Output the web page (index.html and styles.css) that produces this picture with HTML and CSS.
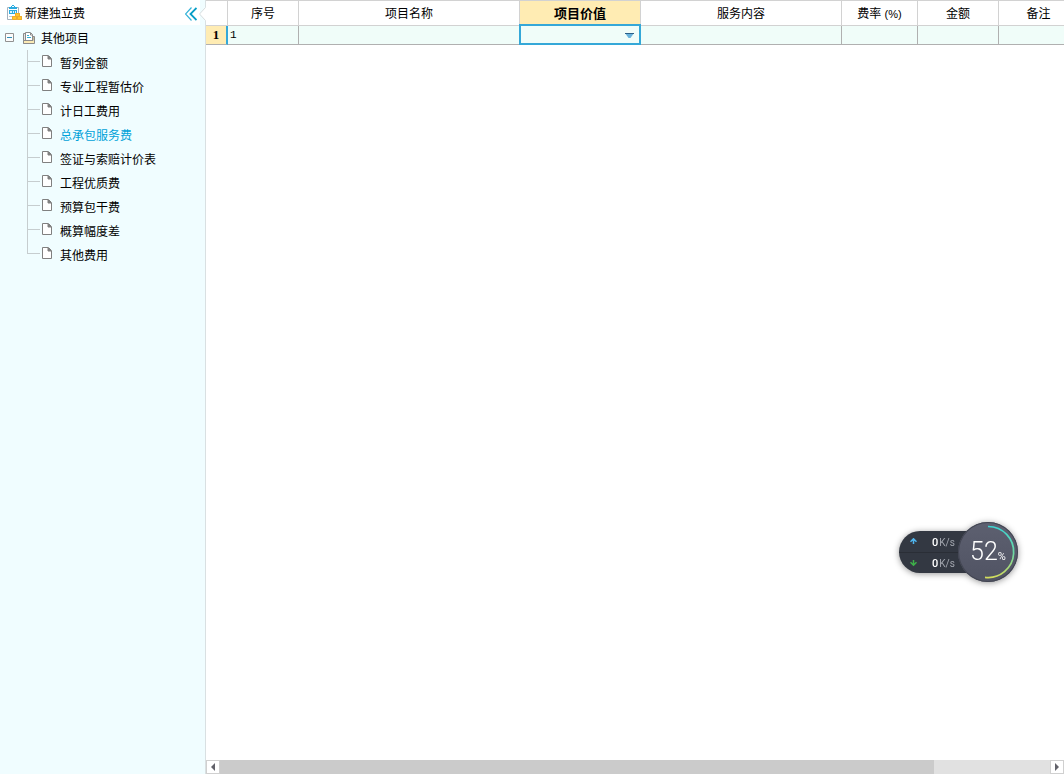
FILE: index.html
```
<!DOCTYPE html>
<html lang="zh-CN">
<head>
<meta charset="utf-8">
<title>其他项目</title>
<link rel="stylesheet" href="styles.css">
</head>
<body>
<svg class="defs" aria-hidden="true">
  <symbol id="page" viewBox="0 0 11 13"><path d="M.5.5h6l3 3v8h-9z" fill="#fff" stroke="#808080"/><path d="M6 1v3h3z" fill="#808080" stroke="#808080"/></symbol>
</svg>
<div class="app">
  <aside class="sidebar">
    <header class="side-head">
      <button class="new-fee" type="button">
        <svg width="15" height="16" viewBox="0 0 15 16" aria-hidden="true">
          <path d="M.5 2.500h11v12H.5z" fill="#fff" stroke="#a3b1bd"/>
          <path d="M2 2h2V1h1V0h2v1h1v1h2v2H2z" fill="#2aabe0"/><path d="M5 1h2v1H5z" fill="#fff"/>
          <path d="M2 5h8v4H2z" fill="#2aabe0"/><path d="M3 6h2v2H3zM6 6h1v2H6zM8 6h1v2H8z" fill="#d9f3ff"/><path d="M2 11.500h3" stroke="#bcc9d2"/>
          <path d="M8 8h5v3H8z" fill="#ffc629"/><path d="M5 11h4v4H5zM10 11h5v4h-5z" fill="#ffc629"/><path d="M8.500 8.500h4v3h-4zM5.500 11.500h4v3h-4zM10.500 11.500h4v3h-4z" stroke="#edaa2e" fill="none"/>
        </svg>
        <span>新建独立费</span>
      </button>
      <button class="collapse" type="button" aria-label="收起">
        <svg width="12" height="14" viewBox="0 0 12 14" fill="none"><path d="M6.500.500L.500 7l6 6.500" stroke="#35b3d9" stroke-width="1.200"/><path d="M11.500 1L5.500 7l6 6" stroke="#079dc6" stroke-width="1.800"/></svg>
      </button>
    </header>
    <svg class="notch" width="7" height="14" viewBox="0 0 7 14" aria-hidden="true"><path d="M7 0L1 7l6 7z" fill="#fff"/><path d="M6.500 .5L.500 7l6 6.500" fill="none" stroke="#d8dcdd"/></svg>
    <nav class="tree">
      <div class="root">
        <button class="toggle" type="button" aria-label="折叠"><svg width="9" height="9" viewBox="0 0 9 9"><path d="M.5.5h8v8h-8z" fill="#fcfcfc" stroke="#919191"/><path d="M2 4.500h5" stroke="#2f8fb8"/></svg></button>
        <svg width="12" height="12" viewBox="0 0 12 12" aria-hidden="true"><path d="M.5 1.500h2v10h-2z" fill="#e6e6e6" stroke="#8b8b8b"/><path d="M2.500.5h5l2 2v6h-7z" fill="#fff" stroke="#8b8b8b"/><path d="M7.500 1v2h2" stroke="#8b8b8b" fill="none"/><path d="M4 3.500h2M4 5.500h4" stroke="#35afd3"/><path d="M10 4.500h1.500v7H.5v-3h9.500z" fill="#fbeab4" stroke="#8b8b8b"/></svg>
        <span>其他项目</span>
      </div>
      <ul>
        <li><svg><use href="#page"/></svg><a href="#">暂列金额</a></li>
        <li><svg><use href="#page"/></svg><a href="#">专业工程暂估价</a></li>
        <li><svg><use href="#page"/></svg><a href="#">计日工费用</a></li>
        <li><svg><use href="#page"/></svg><a class="current" href="#">总承包服务费</a></li>
        <li><svg><use href="#page"/></svg><a href="#">签证与索赔计价表</a></li>
        <li><svg><use href="#page"/></svg><a href="#">工程优质费</a></li>
        <li><svg><use href="#page"/></svg><a href="#">预算包干费</a></li>
        <li><svg><use href="#page"/></svg><a href="#">概算幅度差</a></li>
        <li><svg><use href="#page"/></svg><a href="#">其他费用</a></li>
      </ul>
    </nav>
  </aside>
  <main class="main">
    <div class="sheet">
      <table>
        <colgroup><col class="c-row"><col class="c-no"><col class="c-name"><col class="c-value"><col class="c-service"><col class="c-rate"><col class="c-sum"><col class="c-note"></colgroup>
        <thead><tr><td></td><th>序号</th><th>项目名称</th><th class="active">项目价值</th><th>服务内容</th><th>费率 <span class="unit">(%)</span></th><th>金额</th><th>备注</th></tr></thead>
        <tbody><tr><th class="row-no" scope="row">1</th><td class="number">1</td><td></td>
          <td class="edit"><div class="combo"><select aria-label="项目价值"><option></option></select><svg width="9" height="5" viewBox="0 0 9 5" aria-hidden="true"><path d="M0 0h9L5.500 5h-2z" fill="#68b2dc"/><path d="M0 .5h9" stroke="#2b5f87"/></svg></div></td>
          <td></td><td></td><td></td><td></td></tr></tbody>
      </table>
    </div>
    <div class="scrollbar">
      <button type="button" aria-label="向左"><svg width="4" height="8" viewBox="0 0 4 8"><path d="M4 0v8L0 4z" fill="#62626a"/></svg></button>
      <div class="track"><div class="thumb"></div></div>
      <button type="button" aria-label="向右"><svg width="4" height="8" viewBox="0 0 4 8"><path d="M0 0v8l4-4z" fill="#62626a"/></svg></button>
    </div>
  </main>
  <div class="monitor">
    <div class="speeds">
      <div class="speed"><svg width="7" height="7" viewBox="0 0 7 7" fill="none" stroke="#4fb4ed" stroke-width="1.500"><path d="M3.500 6V1M.5 3.800l3-3 3 3"/></svg><b>0</b><span>K/s</span></div>
      <div class="speed"><svg width="7" height="7" viewBox="0 0 7 7" fill="none" stroke="#3eb049" stroke-width="1.500"><path d="M3.500 0v5M.5 2.200l3 3 3-3"/></svg><b>0</b><span>K/s</span></div>
    </div>
    <div class="gauge">
      <svg width="60" height="60" viewBox="0 0 60 60" fill="none" aria-hidden="true">
        <defs><linearGradient id="arc" x1="0" y1="0" x2="0" y2="1"><stop stop-color="#3dd5d2"/><stop offset=".55" stop-color="#70d9a0"/><stop offset="1" stop-color="#d2dc5c"/></linearGradient></defs>
        <path d="M30 4.500A25.500 25.500 0 1 1 27 55.300" stroke="url(#arc)" stroke-width="1.700"/>
      </svg>
      <div class="percent"><span>52</span><small>%</small></div>
    </div>
  </div>
</div>
</body>
</html>
```
FILE: styles.css
```
* { box-sizing: border-box; }
body { margin: 0; font: 12px/18px "Liberation Sans", "Noto Sans CJK SC", sans-serif; color: #000; background: #fff; }
button { padding: 0; border: 0; background: none; font: inherit; color: inherit; }
svg { display: block; flex: none; }
.defs { position: absolute; width: 0; height: 0; }
.app { position: relative; display: flex; height: 100vh; overflow: hidden; }

.sidebar { position: relative; flex: none; width: 206px; background: #f0fdff; border-right: 1px solid #d9e0e2; }
.side-head { display: flex; align-items: center; justify-content: space-between; height: 25px; margin-right: 5px; padding: 0 3px 0 7px; background: #fff; }
.new-fee { display: flex; align-items: center; gap: 3px; }
.new-fee span { padding-top: 2px; }
.collapse { padding-top: 3px; }
.notch { position: absolute; top: 7px; right: -1px; }
.root { display: flex; align-items: center; height: 25px; padding-left: 5px; }
.root span { margin-left: 6px; padding-top: 3px; }
.toggle { margin-right: 9px; }
.tree ul { margin: 0 0 0 27px; padding: 0; list-style: none; }
.tree li { display: flex; align-items: center; height: 24px; background: linear-gradient(#c6cdcf, #c6cdcf) 0 0 / 1px 100% no-repeat, linear-gradient(#c6cdcf, #c6cdcf) 0 11px / 13px 1px no-repeat; }
.tree li:last-child { background-size: 1px 12px, 13px 1px; }
.tree li svg { width: 11px; height: 13px; margin: 0 7px 1px 15px; }
.tree a { padding-top: 3px; color: #000; text-decoration: none; }
.tree a.current { color: #00a2d9; }

.main { flex: 1; min-width: 0; display: flex; flex-direction: column; }
.sheet { flex: 1; overflow: hidden; }
table { table-layout: fixed; width: 873px; border-collapse: separate; border-spacing: 0; }
.c-row { width: 22px; }
.c-no { width: 71px; }
.c-name { width: 221px; }
.c-value { width: 121px; }
.c-service { width: 201px; }
.c-rate { width: 76px; }
.c-sum { width: 81px; }
.c-note { width: 80px; }
th, td { padding: 0; font-weight: normal; border: 0 solid #d2d2d2; border-right-width: 1px; border-bottom-width: 1px; }
thead th, thead td { height: 26px; padding-top: 2px; border-top-width: 1px; }
thead th.active { background: #ffecb3; font-weight: bold; font-size: 13px; }
.unit { font-size: 11px; }
tbody th, tbody td { height: 19px; line-height: 18px; background: #f0fdf9; border-color: #b0b0b0; }
tbody td { padding-left: 2px; }
tbody th.row-no { background: #ffecb3; border-right: 2px solid #35a8d8; font-weight: bold; font-family: "Liberation Serif", serif; font-size: 13px; }
td.number { font-family: "Liberation Mono", monospace; font-size: 11px; }
.edit { position: relative; }
.combo { position: absolute; inset: -2px -1px -1px; }
.combo select { display: block; width: 100%; height: 100%; margin: 0; appearance: none; border: 2px solid #35a8d8; border-radius: 0; background: #f0fdf9; outline: 0; }
.combo svg { position: absolute; right: 7px; top: 9px; pointer-events: none; }

.scrollbar { display: flex; height: 14px; background: #e1e1e1; }
.scrollbar button { display: flex; align-items: center; justify-content: center; width: 14px; background: #fff; border: 1px solid #d0d0d0; }
.track { flex: 1; }
.thumb { width: 86%; height: 100%; background: #cbcbcb; }

.monitor { position: absolute; right: 46px; bottom: 192px; display: flex; align-items: center; filter: drop-shadow(0 1px 3px #0006); }
.speeds { width: 80px; height: 42px; margin-right: -21px; border-radius: 21px 0 0 21px; background: #333842; }
.speed { display: flex; align-items: center; height: 21px; padding: 2px 0 0 11px; color: #a3a7af; font: 10px/18px Roboto, sans-serif; }
.speed + .speed { border-top: 1px solid #2a2e36; }
.speed svg { margin: 0 15px 2px 0; }
.speed b { margin-right: 1px; color: #fff; font-size: 11px; font-weight: 500; }
.gauge { position: relative; display: grid; place-items: center; border-radius: 50%; background: linear-gradient(#5d6070, #505363); box-shadow: inset 0 0 0 1px #434653; }
.gauge > * { grid-area: 1 / 1; }
.percent { display: flex; align-items: baseline; padding-top: 4px; color: #fff; font: 300 25px/30px Roboto, sans-serif; }
.percent small { font-size: 11px; font-weight: 400; }
```
